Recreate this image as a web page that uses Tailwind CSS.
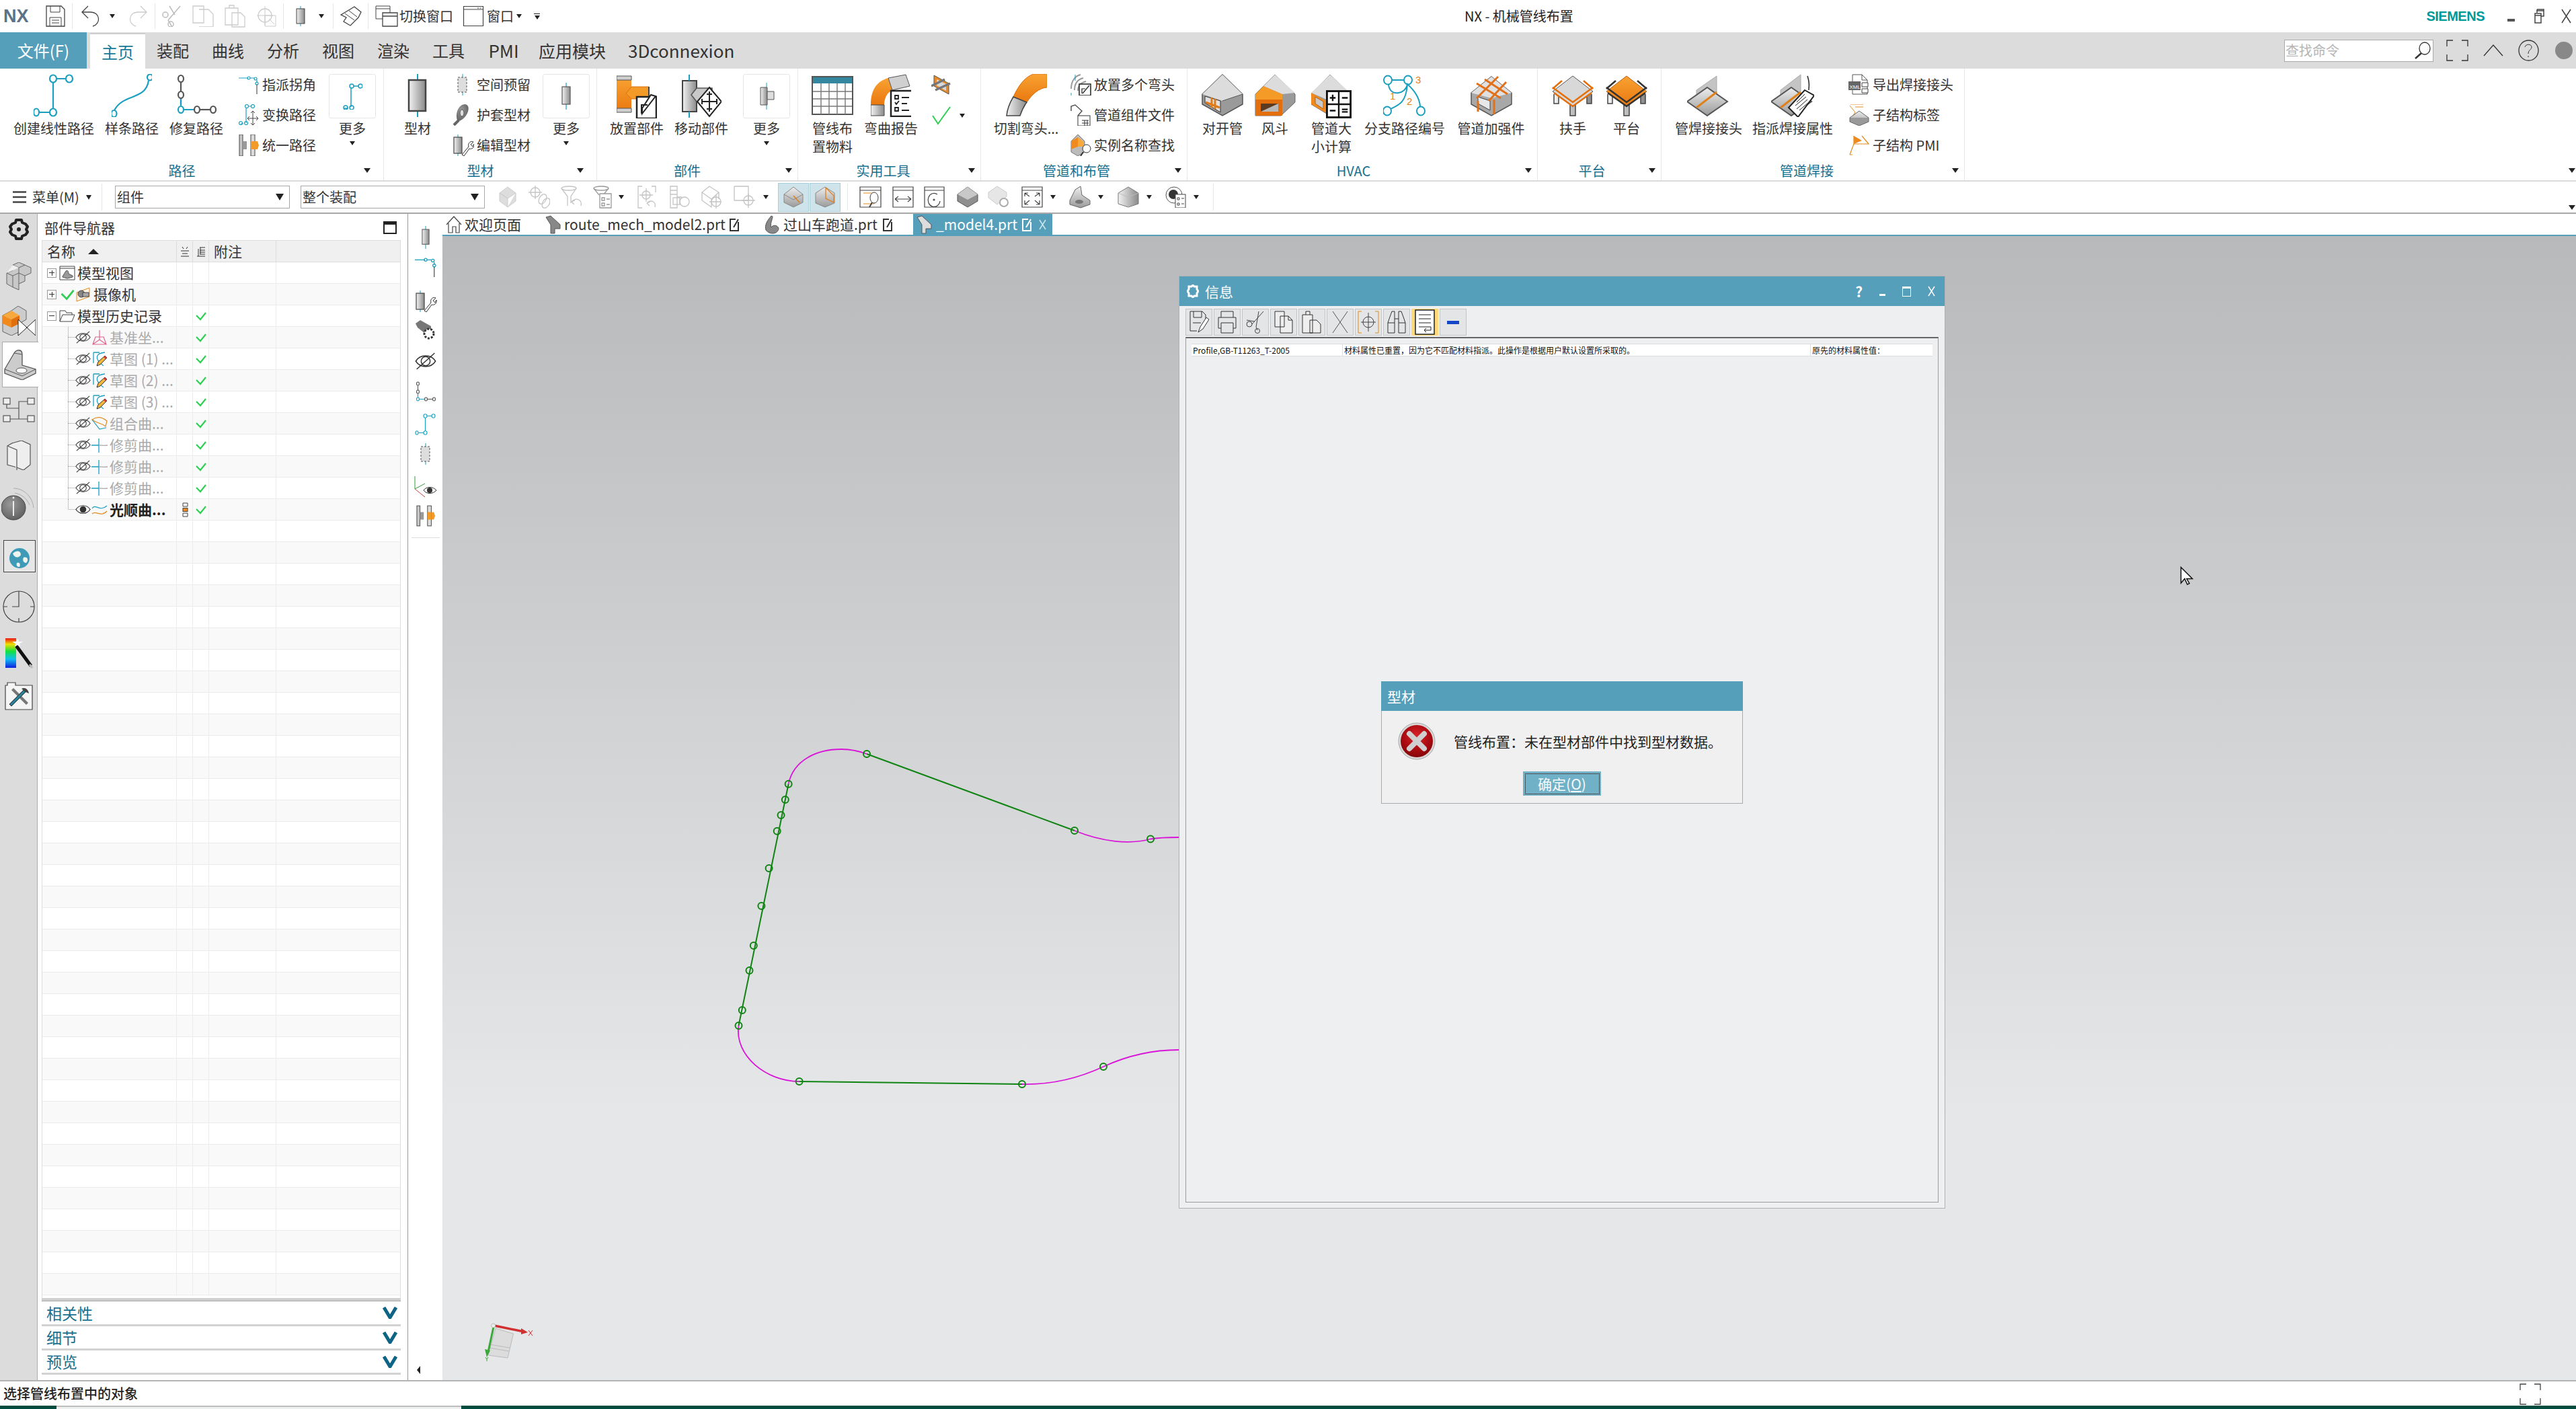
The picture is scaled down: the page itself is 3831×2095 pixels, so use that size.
<!DOCTYPE html>
<html lang="zh-CN">
<head>
<meta charset="UTF-8">
<title>NX - 机械管线布置</title>
<script src="https://cdn.jsdelivr.net/npm/@tailwindcss/browser@4"></script>
</head>
<body class="w-[3831px] h-[2095px] overflow-hidden bg-white text-[20px] text-[#333] font-['Noto_Sans_CJK_SC','Noto_Sans',sans-serif]">

<!-- shared gradients and icons -->
<svg class="absolute w-0 h-0">
  <defs>
    <linearGradient id="gv"><stop offset="0" stop-color="#f2f2f2"/><stop offset="1" stop-color="#8a8a8a"/></linearGradient>
    <linearGradient id="gd" x1="0" y1="0" x2="0" y2="1"><stop offset="0" stop-color="#eeeeee"/><stop offset="1" stop-color="#9a9a9a"/></linearGradient>
    <linearGradient id="go" x1="0" y1="0" x2="0" y2="1"><stop offset="0" stop-color="#f9a233"/><stop offset="1" stop-color="#e9780f"/></linearGradient>
    <radialGradient id="gr" cx=".5" cy=".35" r=".7"><stop offset="0" stop-color="#d8232a"/><stop offset=".6" stop-color="#a90b10"/><stop offset="1" stop-color="#7c0508"/></radialGradient>
    <radialGradient id="gg" cx=".4" cy=".35" r=".75"><stop offset="0" stop-color="#9a9a9a"/><stop offset="1" stop-color="#5a5a5a"/></radialGradient>
    <linearGradient id="grb" x1="0" y1="0" x2="0" y2="1"><stop offset="0" stop-color="#f01010"/><stop offset=".2" stop-color="#f0e000"/><stop offset=".45" stop-color="#10e040"/><stop offset=".7" stop-color="#10c0f0"/><stop offset="1" stop-color="#1020e0"/></linearGradient>

    <symbol id="i-linear" viewBox="0 0 60 64"><g fill="none" stroke="#1b9fc0" stroke-width="2.2"><path d="M34 7H48M29 12V52M9 57H24"/><ellipse cx="29" cy="7" rx="5" ry="5.5"/><ellipse cx="53" cy="7" rx="5" ry="5.5"/><ellipse cx="4" cy="57" rx="4" ry="5.5"/><ellipse cx="29" cy="57" rx="5" ry="5.5"/></g></symbol>
    <symbol id="i-spline" viewBox="0 0 60 64"><g fill="none" stroke="#1b9fc0" stroke-width="2.2"><path d="M55 10C50 40 18 28 4 54"/><ellipse cx="57" cy="5" rx="4" ry="4.5"/><ellipse cx="3.500" cy="59" rx="4" ry="5"/></g></symbol>
    <symbol id="i-repair" viewBox="0 0 60 64"><g fill="none" stroke-width="2.2"><path d="M7 13V26M7 37V47" stroke="#555"/><path d="M7 37V47M12 53H26" stroke="#1b9fc0"/><path d="M36 53H50" stroke="#555"/><ellipse cx="7" cy="7" rx="4" ry="5" stroke="#555"/><ellipse cx="7" cy="31" rx="4" ry="5" stroke="#555"/><ellipse cx="7" cy="53" rx="4" ry="5" stroke="#1b9fc0"/><ellipse cx="31" cy="53" rx="4" ry="5" stroke="#555"/><ellipse cx="55" cy="53" rx="4" ry="5" stroke="#555"/></g></symbol>
    <symbol id="i-more-route" viewBox="0 0 30 40"><g fill="none" stroke="#1b9fc0" stroke-width="1.500"><path d="M13 7V36M17 5H24M3 38H9"/><circle cx="14" cy="5" r="3"/><circle cx="27" cy="5" r="3"/><circle cx="5" cy="37" r="3"/><circle cx="14" cy="37" r="3"/></g></symbol>
    <symbol id="i-profile" viewBox="0 0 60 64"><path d="M30 0V64" stroke="#1b9fc0" stroke-width="2"/><rect x="17" y="9" width="25" height="46" fill="url(#gv)" stroke="#444" stroke-width="2.500"/></symbol>
    <symbol id="i-profile-s" viewBox="0 0 24 40"><path d="M12 0V40" stroke="#1b9fc0" stroke-width="1.200"/><rect x="6" y="6" width="12" height="26" fill="url(#gv)" stroke="#555" stroke-width="1.200"/></symbol>
    <symbol id="i-place" viewBox="0 0 60 64"><path d="M0 3H22V55H0Z" fill="url(#go)"/><path d="M22 18H48V36H22L14 28Z" fill="#f39a27" stroke="#d9700d"/><path d="M0 2H22V8H0ZM0 50H22V56H0Z" fill="#cfcfcf" stroke="#555"/><path d="M48 18V36" stroke="#444" stroke-width="2"/><rect x="30" y="33" width="29" height="32" fill="#fff" stroke="#222" stroke-width="2.500"/><path d="M37 58V45H46M38 58L58 32L51 30L38 50Z" fill="#fff" stroke="#222" stroke-width="2"/></symbol>
    <symbol id="i-move" viewBox="0 0 60 64"><path d="M2 9H23V55H2Z" fill="url(#gv)" stroke="#444" stroke-width="2"/><path d="M23 20H46V40H23L15 30Z" fill="#c8c8c8" stroke="#555" stroke-width="1.500"/><path d="M12 0V9M12 55V64" stroke="#1b9fc0" stroke-width="2"/><path d="M42 19L60 40L42 62L24 40Z" fill="#fff" stroke="#222" stroke-width="2"/><path d="M42 25V55M31 40H53M38 29H46M38 51H46M31 36V44M53 36V44" stroke="#222" stroke-width="2" fill="none"/></symbol>
    <symbol id="i-more-part" viewBox="0 0 30 40"><path d="M15 0V40" stroke="#1b9fc0" stroke-width="1"/><path d="M6 7H16V33H6Z" fill="url(#gv)" stroke="#555"/><path d="M16 13H26V25H16Z" fill="#ddd" stroke="#555"/></symbol>
    <symbol id="i-table" viewBox="0 0 62 60"><rect x="1" y="2" width="60" height="56" fill="#fff" stroke="#555" stroke-width="2"/><rect x="2" y="3" width="58" height="9" fill="#35869f"/><path d="M2 24H60M2 35H60M2 46H60M14 12V58M26 12V58M38 12V58M50 12V58" stroke="#777" stroke-width="1.400"/></symbol>
    <symbol id="i-bend" viewBox="0 0 60 64"><path d="M0 46C0 20 12 10 26 6L32 24C24 28 20 36 20 46Z" fill="url(#go)"/><path d="M0 46H20V62H0Z" fill="url(#gv)" stroke="#444"/><path d="M26 6L52 1L58 18L32 24Z" fill="#d0d0d0" stroke="#555"/><rect x="30" y="25" width="32" height="38" fill="#fff" stroke="#222" stroke-width="2.500"/><path d="M36 32h5v5h-5zM36 50h5v5h-5zM36 42l2 3 4-5M46 35h11M46 44h8M46 54h11" fill="none" stroke="#222" stroke-width="1.800"/></symbol>
    <symbol id="i-cut" viewBox="0 0 62 64"><path d="M42 0H62V20C50 21 40 30 32 42L12 34C20 16 30 4 42 0Z" fill="url(#go)" stroke="#d9700d"/><path d="M12 34L32 42C26 50 24 56 22 62H2C3 52 6 44 12 34Z" fill="url(#gv)" stroke="#444" stroke-width="1.500"/></symbol>
    <symbol id="i-split" viewBox="0 0 62 64"><path d="M31 1L61 30V45L31 62L1 45V30Z" fill="#9a9a9a" stroke="#555" stroke-width="1.500"/><path d="M31 1L61 30L31 40L1 30Z" fill="#dcdcdc"/><path d="M5 33L28 40V57L5 43Z" fill="#e0e0e0" stroke="#333"/><path d="M15 35V50M6 42L27 50M20 37V52" stroke="#e07a16" stroke-width="3"/><path d="M31 40L61 30" stroke="#555"/></symbol>
    <symbol id="i-hood" viewBox="0 0 62 64"><path d="M31 1L61 30V42L40 62H2V30Z" fill="#9a9a9a" stroke="#666" stroke-width="1"/><path d="M14 18L31 1L61 28L42 30Z" fill="#dcdcdc"/><path d="M2 38V30L14 18L42 30V38Z" fill="#f39a27"/><path d="M2 38H42V62H2Z" fill="#e36f0c"/><path d="M10 44H36V56H10Z" fill="#5a3a20"/><path d="M10 56L36 44V56Z" fill="#b8b8b8"/></symbol>
    <symbol id="i-size" viewBox="0 0 60 64"><path d="M28 1L58 30V45L28 62L0 45V30Z" fill="#9a9a9a" stroke="#666"/><path d="M28 1L58 28L28 40L0 28Z" fill="#dcdcdc"/><path d="M0 28L22 40V58L0 45Z" fill="#f08a1d"/><path d="M6 34L18 41V52L6 44Z" fill="#c8c8c8" stroke="#b85f10"/></symbol>
    <symbol id="i-calc" viewBox="0 0 40 44"><rect x="1.500" y="1.500" width="37" height="41" fill="#fff" stroke="#111" stroke-width="3"/><path d="M20 1V43M1 22H39M6 12H15M10.500 7V17M6 32H15M25 30H34M25 34H34M25 12H34" stroke="#111" stroke-width="2.500"/></symbol>
    <symbol id="i-branch" viewBox="0 0 64 64"><g fill="none" stroke="#1b9fc0" stroke-width="2"><path d="M13 9H31M8 16C10 35 34 30 36 15C46 24 54 36 55 48M11 52C24 46 34 42 36 16"/><ellipse cx="7" cy="9" rx="6" ry="6.500"/><ellipse cx="37" cy="9" rx="6" ry="6.500"/><ellipse cx="6" cy="55" rx="6" ry="6.500"/><ellipse cx="56" cy="55" rx="6" ry="6.500"/></g><text x="48" y="14" font-size="15" fill="#e9801a" font-family="Liberation Sans">3</text><text x="10" y="38" font-size="15" fill="#e9801a" font-family="Liberation Sans">1</text><text x="35" y="46" font-size="15" fill="#e9801a" font-family="Liberation Sans">2</text></symbol>
    <symbol id="i-stiff" viewBox="0 0 64 64"><path d="M32 4L62 28V45L32 62L2 45V28Z" fill="#a8a8a8" stroke="#555" stroke-width="1.500"/><path d="M32 4L62 28L32 36L2 28Z" fill="#e0e0e0"/><path d="M12 34L30 40V54L12 44Z" fill="#e8e8e8" stroke="#444"/><path d="M10 14L46 36M22 8L56 30M42 4L10 36M54 12L28 40M36 38V60M12 40V56" stroke="#e0701a" stroke-width="3" fill="none"/></symbol>
    <symbol id="i-rail" viewBox="0 0 64 64"><path d="M4 30V44h7V30M53 30V44h7V30M28 40V62h8V40" fill="url(#gv)" stroke="#444" stroke-width="1.500"/><path d="M32 3L62 26L32 48L2 26Z" fill="#d8d8d8" stroke="#555"/><path d="M2 20L32 42L62 20M4 28L32 48L60 28" fill="none" stroke="#e36f0c" stroke-width="2.500"/><path d="M16 10L2 22M48 10L62 22" stroke="#e36f0c" stroke-width="2.500"/></symbol>
    <symbol id="i-plat" viewBox="0 0 64 64"><path d="M4 30V44h7V30M53 30V44h7V30M28 40V62h8V40" fill="url(#gv)" stroke="#444" stroke-width="1.500"/><path d="M32 3L62 26L32 48L2 26Z" fill="url(#go)" stroke="#b85f10"/><path d="M2 20L32 42L62 20M4 28L32 48L60 28" fill="none" stroke="#333" stroke-width="2.500"/><path d="M16 10L2 22M48 10L62 22" stroke="#333" stroke-width="2.500"/></symbol>
    <symbol id="i-weld" viewBox="0 0 64 64"><path d="M14 24L44 3V40L14 50Z" fill="#c4c4c4" stroke="#aaa"/><path d="M30 20L60 41L30 62L0 41Z" fill="url(#gd)" stroke="#555" stroke-width="2"/><path d="M14 50L44 27" stroke="#e0801a" stroke-width="3"/></symbol>
    <symbol id="i-weldattr" viewBox="0 0 64 64"><path d="M14 24L44 1V40L14 50Z" fill="#c4c4c4" stroke="#aaa"/><path d="M30 20L60 41L30 62L0 41Z" fill="url(#gd)" stroke="#555" stroke-width="2"/><path d="M14 50L44 27" stroke="#e0801a" stroke-width="3"/><path d="M54 3C58 14 56 18 56 24" stroke="#222" fill="none" stroke-width="1.500"/><path d="M50 24L64 32L40 64L26 50Z" fill="#fff" stroke="#222" stroke-width="2"/><path d="M38 42L50 30M36 47L52 34M38 52L54 38M42 54L56 42" stroke="#222"/></symbol>

    <symbol id="s-corner" viewBox="0 0 30 30"><g fill="none" stroke="#1b9fc0" stroke-width="1.200"><path d="M0 5H14M17 5H23M27 8V12"/><circle cx="15" cy="5" r="2"/><circle cx="25" cy="6" r="2"/><circle cx="27" cy="13" r="2"/></g><path d="M27 15V29" stroke="#333"/></symbol>
    <symbol id="s-xform" viewBox="0 0 30 32"><g fill="none" stroke="#1b9fc0" stroke-width="1.200"><path d="M11 6V28M14 3H18M3 29H7"/><circle cx="12" cy="3" r="2.500"/><circle cx="21" cy="3" r="2.500"/><circle cx="3" cy="28" r="2.500"/><circle cx="11" cy="28" r="2.500"/></g><path d="M21 10V31M13 21H29M18 13L21 10L24 13M18 28L21 31L24 28M16 18L13 21L16 24M26 18L29 21L26 24" fill="none" stroke="#444"/></symbol>
    <symbol id="s-unify" viewBox="0 0 30 32"><rect x="1" y="0" width="5" height="32" fill="#c8c8c8" stroke="#444"/><rect x="18" y="0" width="6" height="32" fill="#ddd" stroke="#444"/><path d="M6 10H12V22H6Z" fill="#999"/><path d="M24 10H28L30 16L28 22H24Z" fill="#f39a27"/><path d="M18 10H24V22H18Z" fill="#f39a27"/></symbol>
    <symbol id="s-space" viewBox="0 0 30 32"><path d="M15 0V32" stroke="#1b9fc0"/><rect x="8" y="5" width="13" height="22" fill="#ddd" stroke="#555" stroke-dasharray="3 2"/></symbol>
    <symbol id="s-sleeve" viewBox="0 0 30 32"><path d="M8 26C2 14 10 0 18 0C28 0 24 18 12 24Z" fill="url(#gg)"/><ellipse cx="14" cy="13" rx="3" ry="5" fill="#ddd" stroke="#555"/><path d="M9 24L2 31" stroke="#666" stroke-width="4"/></symbol>
    <symbol id="s-edit" viewBox="0 0 32 32"><path d="M8 0V32" stroke="#1b9fc0"/><rect x="2" y="4" width="12" height="24" fill="url(#gv)" stroke="#444" stroke-width="1.200"/><path d="M14 30L24 18C22 12 28 9 31 11L27 15L30 18L32 14C33 20 28 22 25 21L17 32Z" fill="#fff" stroke="#333"/></symbol>
    <symbol id="s-u1" viewBox="0 0 30 32"><path d="M4 2L26 14V30L4 18Z" fill="#e88a2a" stroke="#555"/><path d="M8 8L22 15V25L8 17Z" fill="#d8d8d8"/><path d="M0 18L20 8M6 24L28 14" stroke="#777" stroke-width="3.500"/></symbol>
    <symbol id="s-multi" viewBox="0 0 32 32"><path d="M2 22C2 10 8 3 16 1M7 24C7 13 12 8 20 6M12 25C12 18 16 13 24 11" fill="none" stroke="#999" stroke-width="2"/><path d="M8 1V10M2 28V32" stroke="#1b9fc0"/><rect x="14" y="15" width="17" height="17" fill="#fff" stroke="#222" stroke-width="1.500"/><path d="M18 29V22H23M19 29L29 17" fill="none" stroke="#222" stroke-width="1.200"/></symbol>
    <symbol id="s-file" viewBox="0 0 32 32"><path d="M2 10V3L8 1L18 10L12 17" fill="none" stroke="#555" stroke-width="1.500"/><rect x="12" y="17" width="18" height="15" fill="#fff" stroke="#333"/><path d="M18 24H28M18 28H28M22 24V32M26 24V32" stroke="#333"/></symbol>
    <symbol id="s-find" viewBox="0 0 32 32"><path d="M2 10L12 0L22 10V26L12 32L2 26Z" fill="#bbb" stroke="#777"/><path d="M2 10L12 4L12 18L2 22Z" fill="#f08a1d"/><path d="M12 4L20 10V18H12Z" fill="#f7a93d"/><circle cx="25" cy="21" r="6" fill="#fff" stroke="#333"/><path d="M20 26L16 32" stroke="#333" stroke-width="2"/></symbol>
    <symbol id="s-xml" viewBox="0 0 32 32"><path d="M6 1H20L28 9V30H6Z" fill="#fff" stroke="#555"/><path d="M20 1V9H28" fill="none" stroke="#555"/><rect x="0" y="11" width="18" height="13" fill="#666"/><text x="1.500" y="21.500" font-size="8" fill="#fff" font-family="Liberation Sans">XML</text><path d="M20 13H29V19H20ZM20 22H29V28H20Z" fill="#fff" stroke="#444"/></symbol>
    <symbol id="s-sub" viewBox="0 0 32 32"><path d="M3 0H22M10 4H22M2 2L10 12L6 18" fill="none" stroke="#e08a1d"/><path d="M16 10L30 20L16 30L2 20Z" fill="url(#gd)" stroke="#666"/><path d="M2 20V26L16 32L30 26V20" fill="#999" stroke="#666"/></symbol>
    <symbol id="s-pmi" viewBox="0 0 32 32"><path d="M8 2V14L2 30" fill="none" stroke="#e08a1d" stroke-width="1.200"/><path d="M8 2L20 9L8 14Z" fill="#f08a1d"/><path d="M8 14L30 14L20 2M2 30H6" fill="none" stroke="#e08a1d" stroke-width="1.200"/></symbol>

    <symbol id="q-win" viewBox="0 0 32 32"><path d="M1.500 1.500H30.500V30.500H1.500ZM1.500 6H30.500" fill="#fff" stroke="#444" stroke-width="1.200"/><path d="M22 4H24M25.500 4H27.500" stroke="#444"/></symbol>
    <symbol id="eye-off" viewBox="0 0 24 24"><path d="M1 12C6 4 18 4 23 12C18 20 6 20 1 12Z" fill="none" stroke="#333" stroke-width="1.100"/><circle cx="12" cy="12" r="5" fill="none" stroke="#333" stroke-width="1.100"/><path d="M2 21L22 3" stroke="#333" stroke-width="1.100"/></symbol>
    <symbol id="eye-on" viewBox="0 0 24 24"><path d="M1 12C6 4 18 4 23 12C18 20 6 20 1 12Z" fill="none" stroke="#333" stroke-width="1.300"/><circle cx="12" cy="12" r="5" fill="#333"/></symbol>
    <symbol id="tick" viewBox="0 0 16 14"><path d="M1 6L7 12L15 2" fill="none" stroke="#2fcf55" stroke-width="2.200"/></symbol>
    <symbol id="t-sketch" viewBox="0 0 24 24"><path d="M3 2V18M3 2H12M20 2C8 3 2 10 18 22" fill="none" stroke="#1b9fc0" stroke-width="1.300"/><path d="M8 22L10 16L20 7L23 10L13 20Z" fill="#f3b83a" stroke="#333"/><path d="M20 7L23 10L21 12L18 9Z" fill="#d83a3a"/></symbol>
    <symbol id="t-trim" viewBox="0 0 24 24"><path d="M0 12H11M11 2V23" fill="none" stroke="#1b9fc0" stroke-width="1.300"/><path d="M11 12C15 12 20 13 24 12" fill="none" stroke="#aaa" stroke-width="1.300"/></symbol>
  </defs>
</svg>

<div class="flex flex-col h-full">

  <!-- quick access / title -->
  <header class="relative flex items-center h-[48px] shrink-0 bg-white">
    <span class="ml-[5px] w-[50px] text-[27px] leading-none font-bold text-[#5d7286] font-['Liberation_Sans',sans-serif]">NX</span>
    <svg class="ml-[12px] w-[30px] h-[32px]" viewBox="0 0 30 32"><path d="M2 1H24L29 6V31H2Z" fill="#fff" stroke="#444" stroke-width="1.300"/><path d="M8 1V10H22V1M7 18H24V31M7 31V18M10 22H21M10 26H21" fill="none" stroke="#444"/></svg>
    <div class="ml-[10px] w-px h-[38px] bg-[#e6e6e6]"></div>
    <svg class="ml-[12px] w-[30px] h-[32px]" viewBox="0 0 30 32"><path d="M11 1L2 10L11 19M2 10H14C30 10 30 28 18 31" fill="none" stroke="#444" stroke-width="1.300"/></svg>
    <span class="ml-[13px] w-0 h-0 border-x-[4px] border-x-transparent border-t-[6px] border-t-[#222]"></span>
    <svg class="ml-[19px] w-[30px] h-[32px]" viewBox="0 0 30 32"><path d="M19 1L28 10L19 19M28 10H16C0 10 0 28 12 31" fill="none" stroke="#ccc" stroke-width="1.300"/></svg>
    <div class="ml-[10px] w-px h-[38px] bg-[#e6e6e6]"></div>
    <svg class="ml-[9px] w-[30px] h-[32px]" viewBox="0 0 30 32"><path d="M28 1L10 22M12 1L20 14M10 22L16 32" fill="none" stroke="#bbb" stroke-width="1.500"/><circle cx="6" cy="14" r="4" fill="none" stroke="#bbb" stroke-width="1.500"/><circle cx="14" cy="28" r="4" fill="none" stroke="#bbb" stroke-width="1.500"/></svg>
    <svg class="ml-[16px] w-[32px] h-[32px]" viewBox="0 0 32 32"><path d="M1 1H17V26H1ZM10 6H24L31 13V32H10" fill="#fff" stroke="#ccc" stroke-width="1.300"/></svg>
    <svg class="ml-[15px] w-[32px] h-[34px]" viewBox="0 0 32 34"><path d="M2 5H21V30H2ZM8 5V1H15V5M12 12H25L31 18V33H12Z" fill="#fff" stroke="#ccc" stroke-width="1.300"/></svg>
    <svg class="ml-[15px] w-[32px] h-[32px]" viewBox="0 0 32 32"><path d="M14 1V30M2 15H26" stroke="#ccc"/><circle cx="14" cy="15" r="10" fill="none" stroke="#ccc" stroke-width="1.300"/><path d="M14 15H30V31H14ZM20 20L28 28" fill="none" stroke="#ccc"/></svg>
    <div class="ml-[9px] w-px h-[38px] bg-[#e6e6e6]"></div>
    <svg class="ml-[18px] w-[14px] h-[30px]" viewBox="0 0 14 30"><path d="M7 0V30" stroke="#1b9fc0"/><rect x="1" y="4" width="12" height="22" fill="url(#gv)" stroke="#444"/></svg>
    <span class="ml-[20px] w-0 h-0 border-x-[4px] border-x-transparent border-t-[6px] border-t-[#222]"></span>
    <div class="ml-[13px] w-px h-[38px] bg-[#e6e6e6]"></div>
    <svg class="ml-[9px] w-[34px] h-[32px]" viewBox="0 0 34 32"><path d="M2 14L22 2L32 10L28 18L16 30L6 24L10 18Z" fill="#fff" stroke="#444" stroke-width="1.300"/><path d="M8 12L22 22M14 8L26 17" stroke="#444"/></svg>
    <div class="ml-[8px] w-px h-[38px] bg-[#e6e6e6]"></div>
    <svg class="ml-[10px] w-[36px] h-[32px]" viewBox="0 0 36 32"><path d="M1 1H22V20H1ZM1 5H22" fill="#fff" stroke="#444"/><path d="M11 11H33V31H11ZM11 16H33" fill="#fff" stroke="#444" stroke-width="1.300"/></svg>
    <span class="w-[80px] leading-none">切换窗口</span>
    <svg class="ml-[14px] w-[32px] h-[32px]"><use href="#q-win"/></svg>
    <span class="ml-[4px] w-[40px] leading-none">窗口</span>
    <span class="ml-[4px] w-0 h-0 border-x-[4px] border-x-transparent border-t-[6px] border-t-[#222]"></span>
    <span class="ml-[18px] flex flex-col items-center"><span class="w-[9px] h-[1px] bg-[#222] mb-[2px]"></span><span class="w-0 h-0 border-x-[4px] border-x-transparent border-t-[6px] border-t-[#222]"></span></span>

    <span class="absolute left-[2178px] top-[9px] text-[#222] leading-[30px]">NX - 机械管线布置</span>

    <span class="ml-auto mr-[34px] text-[20px] font-bold tracking-[-0.5px] text-[#009999] font-['Liberation_Sans',sans-serif]">SIEMENS</span>
    <span class="mt-[11px] w-[11px] h-[4px] bg-[#555]"></span>
    <svg class="ml-[29px] w-[15px] h-[22px]" viewBox="0 0 15 22"><path d="M4 1H14V11H10M4 1V6M4 3H14" fill="none" stroke="#444" stroke-width="1.500"/><rect x="1" y="7" width="9" height="14" fill="#fff" stroke="#444" stroke-width="1.500"/><path d="M1 10H10" stroke="#444" stroke-width="1.500"/></svg>
    <svg class="ml-[25px] mr-[7px] w-[15px] h-[22px]" viewBox="0 0 15 22"><path d="M1 1L14 21M14 1L1 21" stroke="#444" stroke-width="1.500"/></svg>
  </header>

  <!-- ribbon tabs -->
  <nav class="flex items-stretch h-[54px] shrink-0 bg-[#dcdcdc] text-[24px] leading-none text-[#333]">
    <div class="flex items-center justify-center w-[129px] bg-[#569fbb] text-white">文件(F)</div>
    <div class="ml-[5px] mt-px flex items-center justify-center w-[82px] bg-white border-t-2 border-[#cfcfcf] text-[#17799a]">主页</div>
    <div class="flex items-center justify-center w-[82px]">装配</div>
    <div class="flex items-center justify-center w-[82px]">曲线</div>
    <div class="flex items-center justify-center w-[82px]">分析</div>
    <div class="flex items-center justify-center w-[82px]">视图</div>
    <div class="flex items-center justify-center w-[82px]">渲染</div>
    <div class="flex items-center justify-center w-[82px]">工具</div>
    <div class="flex items-center justify-center w-[82px] text-[26px]">PMI</div>
    <div class="ml-[-5px] flex items-center justify-center w-[132px] text-[25px]">应用模块</div>
    <div class="ml-[17px] flex items-center text-[26px]">3Dconnexion</div>
    <div class="ml-auto flex items-center">
      <div class="flex items-center justify-between w-[222px] h-[33px] pl-px pr-[2px] bg-white border border-[#aaa] text-[20px] text-[#b5b5b5]">
        <span>查找命令</span>
        <svg class="w-[26px] h-[26px]" viewBox="0 0 26 26"><ellipse cx="16" cy="10" rx="8" ry="9" fill="#fff" stroke="#333" stroke-width="1.300"/><path d="M11 17L2 25" stroke="#333" stroke-width="2.500"/></svg>
      </div>
      <svg class="ml-[19px] w-[33px] h-[32px]" viewBox="0 0 33 32" fill="none" stroke="#333" stroke-width="1.300"><path d="M10 1H1V10M23 1H32V10M1 22V31H10M32 22V31H23"/></svg>
      <svg class="ml-[22px] w-[30px] h-[18px]" viewBox="0 0 30 18" fill="none" stroke="#333" stroke-width="1.300"><path d="M1 17L15 1L29 17"/></svg>
      <svg class="ml-[22px] w-[31px] h-[32px]" viewBox="0 0 31 32" fill="none" stroke="#333"><ellipse cx="15.500" cy="16" rx="14.500" ry="15" stroke-width="1.300"/><path d="M10 11C11 6 20 6 20 11C20 15 15 15 15 21M15 24V26"/></svg>
      <div class="ml-[24px] mr-[5px] w-[26px] h-[26px] rounded-full bg-[#888]"></div>
    </div>
  </nav>

  <!-- ribbon -->
  <section class="flex h-[168px] shrink-0 border-b-2 border-[#dadada] bg-white text-[20px] leading-[27px] text-[#333]">

    <div class="flex flex-col w-[571px] shrink-0 border-r border-[#e8e8e8]">
      <div class="flex h-[139px] pt-[8px]">
        <div class="w-[150px] pl-[10px] flex flex-col items-center"><svg class="w-[60px] h-[64px]"><use href="#i-linear"/></svg><span class="mt-[3px]">创建线性路径</span></div>
        <div class="w-[92px] flex flex-col items-center"><svg class="w-[60px] h-[64px]"><use href="#i-spline"/></svg><span class="mt-[3px]">样条路径</span></div>
        <div class="w-[100px] flex flex-col items-center"><svg class="w-[60px] h-[64px]"><use href="#i-repair"/></svg><span class="mt-[3px]">修复路径</span></div>
        <div class="w-[147px] pl-[13px] mt-[-7px] flex flex-col">
          <div class="flex items-center h-[45px] gap-[5px]"><svg class="w-[30px] h-[30px]"><use href="#s-corner"/></svg>指派拐角</div>
          <div class="flex items-center h-[45px] gap-[5px]"><svg class="w-[30px] h-[32px]"><use href="#s-xform"/></svg>变换路径</div>
          <div class="flex items-center h-[45px] gap-[5px]"><svg class="w-[30px] h-[32px]"><use href="#s-unify"/></svg>统一路径</div>
        </div>
        <div class="w-[70px] flex flex-col items-center">
          <div class="flex items-center justify-center w-[70px] h-[66px] border border-[#e6e6e6] rounded-[3px]"><svg class="w-[30px] h-[40px]"><use href="#i-more-route"/></svg></div>
          <span class="mt-[1px]">更多</span>
          <span class="mt-[6px] w-0 h-0 border-x-[4px] border-x-transparent border-t-[6px] border-t-[#222]"></span>
        </div>
      </div>
      <div class="flex items-center h-[29px]"><span class="flex-1 text-center text-[#17708f]">路径</span><span class="w-[29px]"><span class="block w-0 h-0 border-x-[5px] border-x-transparent border-t-[7px] border-t-[#222]"></span></span></div>
    </div>

    <div class="flex flex-col w-[317px] shrink-0 border-r border-[#e8e8e8]">
      <div class="flex h-[139px] pt-[8px]">
        <div class="w-[102px] pr-[2px] flex flex-col items-center"><svg class="w-[60px] h-[64px]"><use href="#i-profile"/></svg><span class="mt-[3px]">型材</span></div>
        <div class="w-[134px] mt-[-7px] flex flex-col">
          <div class="flex items-center h-[45px] gap-[6px]"><svg class="w-[30px] h-[32px]"><use href="#s-space"/></svg>空间预留</div>
          <div class="flex items-center h-[45px] gap-[6px]"><svg class="w-[30px] h-[32px]"><use href="#s-sleeve"/></svg>护套型材</div>
          <div class="flex items-center h-[45px] gap-[4px]"><svg class="w-[32px] h-[32px]"><use href="#s-edit"/></svg>编辑型材</div>
        </div>
        <div class="w-[70px] flex flex-col items-center">
          <div class="flex items-center justify-center w-[70px] h-[66px] border border-[#e6e6e6] rounded-[3px]"><svg class="w-[24px] h-[40px]"><use href="#i-profile-s"/></svg></div>
          <span class="mt-[1px]">更多</span>
          <span class="mt-[6px] w-0 h-0 border-x-[4px] border-x-transparent border-t-[6px] border-t-[#222]"></span>
        </div>
      </div>
      <div class="flex items-center h-[29px]"><span class="flex-1 text-center text-[#17708f]">型材</span><span class="w-[29px]"><span class="block w-0 h-0 border-x-[5px] border-x-transparent border-t-[7px] border-t-[#222]"></span></span></div>
    </div>

    <div class="flex flex-col w-[299px] shrink-0 border-r border-[#e8e8e8]">
      <div class="flex h-[139px] pt-[8px]">
        <div class="w-[104px] pl-[14px] flex flex-col items-center"><svg class="w-[60px] h-[66px]"><use href="#i-place"/></svg><span class="mt-[1px]">放置部件</span></div>
        <div class="w-[102px] flex flex-col items-center"><svg class="w-[60px] h-[66px]"><use href="#i-move"/></svg><span class="mt-[1px]">移动部件</span></div>
        <div class="ml-[11px] w-[70px] flex flex-col items-center">
          <div class="flex items-center justify-center w-[70px] h-[66px] border border-[#e6e6e6] rounded-[3px]"><svg class="w-[30px] h-[40px]"><use href="#i-more-part"/></svg></div>
          <span class="mt-[1px]">更多</span>
          <span class="mt-[6px] w-0 h-0 border-x-[4px] border-x-transparent border-t-[6px] border-t-[#222]"></span>
        </div>
      </div>
      <div class="flex items-center h-[29px]"><span class="flex-1 text-center text-[#17708f] pr-[12px]">部件</span><span class="w-[18px]"><span class="block w-0 h-0 border-x-[5px] border-x-transparent border-t-[7px] border-t-[#222]"></span></span></div>
    </div>

    <div class="flex flex-col w-[272px] shrink-0 border-r border-[#e8e8e8]">
      <div class="flex h-[139px] pt-[8px]">
        <div class="w-[92px] pl-[10px] flex flex-col items-center"><svg class="w-[62px] h-[60px] mt-[2px]"><use href="#i-table"/></svg><span class="mt-[5px] w-[62px] text-center">管线布置物料</span></div>
        <div class="w-[92px] flex flex-col items-center"><svg class="w-[60px] h-[64px]"><use href="#i-bend"/></svg><span class="mt-[3px]">弯曲报告</span></div>
        <div class="ml-[10px] pl-[4px] flex flex-col items-start">
          <svg class="w-[30px] h-[32px]"><use href="#s-u1"/></svg>
          <div class="mt-[16px] flex items-center gap-[12px]"><svg class="w-[30px] h-[28px]" viewBox="0 0 30 28"><path d="M2 14L10 26L28 1" fill="none" stroke="#2fcf55" stroke-width="2"/></svg><span class="w-0 h-0 border-x-[4px] border-x-transparent border-t-[6px] border-t-[#222]"></span></div>
        </div>
      </div>
      <div class="flex items-center h-[29px]"><span class="flex-1 text-center text-[#17708f]">实用工具</span><span class="w-[18px]"><span class="block w-0 h-0 border-x-[5px] border-x-transparent border-t-[7px] border-t-[#222]"></span></span></div>
    </div>

    <div class="flex flex-col w-[307px] shrink-0 border-r border-[#e8e8e8]">
      <div class="flex h-[139px] pt-[8px]">
        <div class="w-[130px] pl-[4px] flex flex-col items-center"><svg class="w-[62px] h-[64px]"><use href="#i-cut"/></svg><span class="mt-[3px]">切割弯头...</span></div>
        <div class="ml-[2px] mt-[-7px] flex flex-col">
          <div class="flex items-center h-[45px] gap-[4px]"><svg class="w-[32px] h-[32px]"><use href="#s-multi"/></svg>放置多个弯头</div>
          <div class="flex items-center h-[45px] gap-[4px]"><svg class="w-[32px] h-[32px]"><use href="#s-file"/></svg>管道组件文件</div>
          <div class="flex items-center h-[45px] gap-[4px]"><svg class="w-[32px] h-[32px]"><use href="#s-find"/></svg>实例名称查找</div>
        </div>
      </div>
      <div class="flex items-center h-[29px]"><span class="flex-1 text-center text-[#17708f] pr-[4px]">管道和布管</span><span class="w-[18px]"><span class="block w-0 h-0 border-x-[5px] border-x-transparent border-t-[7px] border-t-[#222]"></span></span></div>
    </div>

    <div class="flex flex-col w-[521px] shrink-0 border-r border-[#e8e8e8]">
      <div class="flex h-[139px] pt-[8px]">
        <div class="w-[92px] pl-[12px] flex flex-col items-center"><svg class="w-[62px] h-[64px]"><use href="#i-split"/></svg><span class="mt-[3px]">对开管</span></div>
        <div class="w-[76px] flex flex-col items-center"><svg class="w-[62px] h-[64px]"><use href="#i-hood"/></svg><span class="mt-[3px]">风斗</span></div>
        <div class="w-[92px] flex flex-col items-center">
          <span class="relative w-[60px] h-[64px]"><svg class="w-[60px] h-[64px]"><use href="#i-size"/></svg><svg class="absolute left-[22px] top-[24px] w-[38px] h-[42px]"><use href="#i-calc"/></svg></span>
          <span class="mt-[3px] w-[62px] text-center">管道大小计算</span>
        </div>
        <div class="w-[126px] flex flex-col items-center"><svg class="w-[64px] h-[64px]"><use href="#i-branch"/></svg><span class="mt-[3px] whitespace-nowrap">分支路径编号</span></div>
        <div class="w-[131px] flex flex-col items-center"><svg class="w-[64px] h-[64px]"><use href="#i-stiff"/></svg><span class="mt-[3px]">管道加强件</span></div>
      </div>
      <div class="flex items-center h-[29px]"><span class="flex-1 text-center text-[#17708f] pr-[8px]">HVAC</span><span class="w-[18px]"><span class="block w-0 h-0 border-x-[5px] border-x-transparent border-t-[7px] border-t-[#222]"></span></span></div>
    </div>

    <div class="flex flex-col w-[184px] shrink-0 border-r border-[#e8e8e8]">
      <div class="flex h-[139px] pt-[8px]">
        <div class="w-[92px] pl-[12px] flex flex-col items-center"><svg class="w-[64px] h-[64px]"><use href="#i-rail"/></svg><span class="mt-[3px]">扶手</span></div>
        <div class="w-[80px] flex flex-col items-center"><svg class="w-[64px] h-[64px]"><use href="#i-plat"/></svg><span class="mt-[3px]">平台</span></div>
      </div>
      <div class="flex items-center h-[29px]"><span class="flex-1 text-center text-[#17708f] pr-[4px]">平台</span><span class="w-[18px]"><span class="block w-0 h-0 border-x-[5px] border-x-transparent border-t-[7px] border-t-[#222]"></span></span></div>
    </div>

    <div class="relative flex flex-col w-[451px] shrink-0 border-r border-[#e8e8e8]">
      <div class="flex h-[139px] pt-[8px]">
        <div class="w-[130px] pl-[10px] flex flex-col items-center"><svg class="w-[64px] h-[64px]"><use href="#i-weld"/></svg><span class="mt-[3px]">管焊接接头</span></div>
        <div class="w-[130px] flex flex-col items-center"><svg class="w-[64px] h-[64px]"><use href="#i-weldattr"/></svg><span class="mt-[3px]">指派焊接属性</span></div>
        <div class="ml-[18px] mt-[-7px] flex flex-col">
          <div class="flex items-center h-[45px] gap-[4px]"><svg class="w-[32px] h-[32px]"><use href="#s-xml"/></svg>导出焊接接头</div>
          <div class="flex items-center h-[45px] gap-[4px]"><svg class="w-[32px] h-[32px]"><use href="#s-sub"/></svg>子结构标签</div>
          <div class="flex items-center h-[45px] gap-[4px]"><svg class="w-[32px] h-[32px]"><use href="#s-pmi"/></svg>子结构 PMI</div>
        </div>
      </div>
      <div class="flex items-center h-[29px]"><span class="flex-1 text-center text-[#17708f]">管道焊接</span><span class="w-[18px]"><span class="block w-0 h-0 border-x-[5px] border-x-transparent border-t-[7px] border-t-[#222]"></span></span></div>
    </div>

    <div class="flex-1 flex items-end justify-end pb-[11px] pr-[1px]"><span class="w-0 h-0 border-x-[5px] border-x-transparent border-t-[7px] border-t-[#222]"></span></div>
  </section>

  <!-- selection bar -->
  <section class="flex items-center h-[48px] shrink-0 border-b-2 border-[#a8a8a8] bg-white text-[20px] text-[#333]">
    <svg class="ml-[19px] w-[20px] h-[18px]" viewBox="0 0 20 18"><path d="M0 1.500H20M0 9H20M0 16.500H20" stroke="#444" stroke-width="2.500"/></svg>
    <span class="ml-[9px] w-[74px] leading-none">菜单(M)</span>
    <span class="ml-[6px] w-0 h-0 border-x-[4px] border-x-transparent border-t-[7px] border-t-[#222]"></span>
    <div class="ml-[15px] w-px h-[40px] bg-[#e6e6e6]"></div>
    <div class="ml-[19px] flex items-center justify-between w-[260px] h-[34px] pl-[2px] pr-[8px] border border-[#a8a8a8]">组件<span class="w-0 h-0 border-x-[6px] border-x-transparent border-t-[10px] border-t-[#222]"></span></div>
    <div class="ml-[16px] flex items-center justify-between w-[274px] h-[34px] pl-[2px] pr-[8px] border border-[#a8a8a8]">整个装配<span class="w-0 h-0 border-x-[6px] border-x-transparent border-t-[10px] border-t-[#222]"></span></div>
    <svg class="ml-[20px] w-[28px] h-[32px]" viewBox="0 0 28 32" fill="#ddd" stroke="#ccc"><path d="M14 1L26 10L14 18L2 10ZM2 10V22L14 31V18ZM26 10V22L14 31"/></svg>
    <svg class="ml-[17px] w-[32px] h-[34px]" viewBox="0 0 32 34" fill="none" stroke="#c4c4c4" stroke-width="1.300"><circle cx="10" cy="10" r="7"/><path d="M10 0V20M0 10H20"/><ellipse cx="21" cy="20" rx="5" ry="8" transform="rotate(30 21 20)"/><ellipse cx="26" cy="26" rx="5" ry="8" transform="rotate(30 26 26)"/></svg>
    <svg class="ml-[16px] w-[34px] h-[34px]" viewBox="0 0 34 34" fill="none" stroke="#c4c4c4" stroke-width="1.300"><ellipse cx="12" cy="4" rx="11" ry="3"/><path d="M1 4L10 16V30M23 4L15 16V26M16 24C24 16 32 22 30 30M16 24L21 22M16 24L20 28"/></svg>
    <svg class="ml-[14px] w-[30px] h-[34px]" viewBox="0 0 30 34" fill="none" stroke="#999" stroke-width="1.300"><ellipse cx="12" cy="4" rx="11" ry="3"/><path d="M1 4L9 14M23 4L15 14"/><path d="M10 12H27V33H10ZM13 18h4v4h-4zM13 26h4v4h-4zM20 20h5M20 28h5" fill="#fff"/></svg>
    <span class="ml-[8px] w-0 h-0 border-x-[4px] border-x-transparent border-t-[6px] border-t-[#222]"></span>
    <svg class="ml-[20px] w-[28px] h-[34px]" viewBox="0 0 28 34" fill="none" stroke="#c4c4c4" stroke-width="1.300"><path d="M7 1H1V33H7M21 1H27V10"/><circle cx="13" cy="14" r="6"/><path d="M13 4V24M3 14H23M14 26C20 20 28 24 26 32M14 26L19 24M14 26L18 30"/></svg>
    <svg class="ml-[20px] w-[30px] h-[34px]" viewBox="0 0 30 34" fill="none" stroke="#c4c4c4" stroke-width="1.300"><path d="M1 1H11V33H1ZM1 7H11M1 13H11M11 17H18"/><rect x="5" y="18" width="10" height="10"/><circle cx="22" cy="24" r="7"/></svg>
    <svg class="ml-[17px] w-[30px] h-[34px]" viewBox="0 0 30 34" fill="none" stroke="#c4c4c4" stroke-width="1.300"><path d="M1 10L12 1L26 10L15 20ZM1 10V22L15 32V20ZM26 10V20"/><circle cx="22" cy="24" r="7"/><path d="M22 14V34M12 24H30"/></svg>
    <svg class="ml-[18px] w-[32px] h-[34px]" viewBox="0 0 32 34" fill="none" stroke="#c4c4c4" stroke-width="1.300"><path d="M1 1H22V22M1 1V22H22"/><circle cx="22" cy="22" r="7"/><path d="M22 12V33M12 22H32"/></svg>
    <span class="ml-[12px] w-0 h-0 border-x-[4px] border-x-transparent border-t-[6px] border-t-[#222]"></span>
    <div class="ml-[14px] flex items-center justify-center w-[46px] h-[43px] bg-[#cfe4ea] border border-[#a9cdd9]">
      <svg class="w-[30px] h-[32px]" viewBox="0 0 30 32"><path d="M15 1L29 12V24L15 31L1 24V12Z" fill="url(#gd)" stroke="#888"/><path d="M1 12L15 20L29 12" fill="none" stroke="#888"/><path d="M15 14L24 24" stroke="#e0801a" stroke-width="1.500"/></svg>
    </div>
    <div class="ml-px flex items-center justify-center w-[46px] h-[43px] bg-[#cfe4ea] border border-[#a9cdd9]">
      <svg class="w-[30px] h-[32px]" viewBox="0 0 30 32"><path d="M15 1L29 10V25L15 31L1 25V10Z" fill="url(#gd)" stroke="#888"/><path d="M16 2L28 14V24M16 2V18L28 24" fill="none" stroke="#e0801a" stroke-width="1.300"/></svg>
    </div>
    <div class="ml-[10px] w-px h-[40px] bg-[#e6e6e6]"></div>
    <svg class="ml-[17px] w-[33px] h-[32px]" viewBox="0 0 33 32" fill="none"><path d="M1 1H32V31H1ZM1 6H32" stroke="#444" stroke-width="1.200"/><path d="M6 10H22V26H6" stroke="#e08a1d"/><ellipse cx="22" cy="17" rx="6" ry="8" fill="#fff" stroke="#444"/><path d="M19 24L15 31" stroke="#444" stroke-width="2"/></svg>
    <svg class="ml-[16px] w-[32px] h-[32px]" viewBox="0 0 32 32" fill="none" stroke="#444" stroke-width="1.200"><path d="M1 1H31V31H1ZM1 6H31M4 19H28M4 19L9 15M4 19L9 23M28 19L23 15M28 19L23 23"/></svg>
    <svg class="ml-[15px] w-[31px] h-[32px]" viewBox="0 0 31 32" fill="none" stroke="#444" stroke-width="1.200"><path d="M1 1H30V31H1ZM1 6H30M20 12A9 10 0 1 0 24 22"/><circle cx="15" cy="20" r="1"/></svg>
    <svg class="ml-[18px] w-[32px] h-[32px]" viewBox="0 0 32 32"><path d="M16 1L31 12V22L16 31L1 22V12Z" fill="#8f8f8f" stroke="#555"/><path d="M16 1L31 12L16 20L1 12Z" fill="#c8c8c8"/></svg>
    <svg class="ml-[14px] w-[33px] h-[34px]" viewBox="0 0 33 34"><path d="M14 1L28 10V16L14 28L1 18V10Z" fill="#e6e6e6" stroke="#ccc"/><circle cx="24" cy="25" r="6" fill="#fff" stroke="#aaa" stroke-width="2"/></svg>
    <svg class="ml-[17px] w-[32px] h-[32px]" viewBox="0 0 32 32" fill="none" stroke="#444" stroke-width="1.200"><path d="M1 1H31V31H1ZM1 6H31M5 10L12 15M5 10V15M5 10H10M27 10L20 15M27 10V15M27 10H22M5 27L12 21M5 27V21M5 27H10M27 27L20 21M27 27V21M27 27H22"/></svg>
    <span class="ml-[11px] w-0 h-0 border-x-[4px] border-x-transparent border-t-[6px] border-t-[#222]"></span>
    <svg class="ml-[19px] w-[34px] h-[34px]" viewBox="0 0 34 34"><path d="M2 22L10 6L18 1L20 14L32 22V28L18 33L2 28Z" fill="url(#gd)" stroke="#666"/><ellipse cx="16" cy="24" rx="6" ry="3" fill="#777"/></svg>
    <span class="ml-[10px] w-0 h-0 border-x-[4px] border-x-transparent border-t-[6px] border-t-[#222]"></span>
    <svg class="ml-[21px] w-[32px] h-[32px]" viewBox="0 0 32 32"><path d="M16 1L31 10V26L16 31L1 26V10Z" fill="url(#gv)" stroke="#777"/><path d="M1 10L16 16L31 10M16 16V31" stroke="#bbb" fill="none"/></svg>
    <span class="ml-[11px] w-0 h-0 border-x-[4px] border-x-transparent border-t-[6px] border-t-[#222]"></span>
    <svg class="ml-[19px] w-[32px] h-[32px]" viewBox="0 0 32 32"><circle cx="14" cy="13" r="12" fill="#fff" stroke="#555"/><circle cx="13" cy="12" r="7" fill="#333"/><rect x="16" y="12" width="15" height="20" fill="#fff" stroke="#444"/><path d="M19 17h3v3h-3zM19 25h3v3h-3zM25 18h4M25 26h4" stroke="#444" fill="none"/></svg>
    <span class="ml-[11px] w-0 h-0 border-x-[4px] border-x-transparent border-t-[6px] border-t-[#222]"></span>
    <div class="ml-[21px] w-px h-[40px] bg-[#e6e6e6]"></div>
    <div class="flex-1 self-end flex justify-end pb-[4px] pr-px"><span class="w-0 h-0 border-x-[5px] border-x-transparent border-t-[7px] border-t-[#222]"></span></div>
  </section>

  <!-- main area -->
  <main class="flex flex-1 min-h-0">

    <!-- resource bar -->
    <aside class="relative flex flex-col items-center w-[56px] shrink-0 bg-[#dcdcdc] border-r border-[#aaa]">
      <svg class="mt-[7px] w-[30px] h-[32px]" viewBox="0 0 30 32"><path d="M15 2L19 2L20 6L25 8L28 12L26 16L28 20L25 24L20 26L19 30H11L10 26L5 24L2 20L4 16L2 12L5 8L10 6L11 2Z" fill="none" stroke="#222" stroke-width="4" stroke-linejoin="round"/><circle cx="15" cy="16" r="3" fill="#222"/></svg>
      <svg class="mt-[33px] w-[38px] h-[42px]" viewBox="0 0 38 42"><path d="M10 4L19 0L28 4L37 8V16L28 20V28L19 32V41L10 37L1 32V16L10 12Z" fill="#c8c8c8" stroke="#666"/><path d="M1 16L10 20L19 16L28 20M10 20V37M19 16V32M10 4L19 8L28 4M19 8V16" fill="none" stroke="#666"/><path d="M10 4L19 8L10 12L1 16Z" fill="#f0f0f0"/></svg>
      <div class="relative mt-[23px] w-[50px] h-[44px]">
        <svg class="w-[50px] h-[44px]" viewBox="0 0 50 44"><path d="M1 14L14 7L24 0L36 7V20L26 26V38L14 44L1 38Z" fill="#ccc" stroke="#666"/><path d="M1 14L14 7L26 14L14 20Z" fill="#f7a93d"/><path d="M1 14L14 20V32L1 26Z" fill="#f08a1d"/><path d="M14 20L26 14V26L14 32Z" fill="#e36f0c"/><path d="M24 20L50 44V20L24 44Z" fill="#fff" stroke="#222"/></svg>
      </div>
      <div class="relative mt-[9px] ml-[3px] flex items-center justify-center w-[54px] h-[68px] bg-white border-y border-l border-[#aaa] mr-[-1px]">
        <svg class="w-[50px] h-[46px]" viewBox="0 0 50 46"><path d="M2 30L16 6C20 0 28 0 28 8V24L48 30V36L28 46L2 36Z" fill="#ccc" stroke="#555" stroke-width="1.300"/><path d="M16 6L28 8M2 30L28 40L48 30" fill="none" stroke="#555"/><ellipse cx="27" cy="32" rx="8" ry="4" fill="#fff" stroke="#555"/></svg>
      </div>
      <svg class="mt-[15px] w-[48px] h-[38px]" viewBox="0 0 48 38" fill="none" stroke="#555" stroke-width="1.200"><rect x="1" y="1" width="10" height="9" fill="#eee"/><rect x="37" y="1" width="10" height="9" fill="#eee"/><rect x="1" y="27" width="10" height="9" fill="#eee"/><rect x="37" y="27" width="10" height="9" fill="#eee"/><path d="M6 10V16H24V32M24 16V6H37M11 32H37"/></svg>
      <svg class="mt-[26px] w-[36px] h-[44px]" viewBox="0 0 36 44" fill="#eee" stroke="#555" stroke-width="1.200"><path d="M1 8L8 4L25 10V44L15 40L1 36Z"/><path d="M1 8L15 14V44M8 4L22 0L35 6V36L25 44"/></svg>
      <div class="mt-[26px] relative w-[52px] h-[50px]">
        <svg class="w-[52px] h-[50px]" viewBox="0 0 52 50"><path d="M18 1C32 1 46 12 48 30M20 8C30 10 38 16 42 26" fill="none" stroke="#aaa"/><circle cx="18" cy="30" r="18" fill="url(#gg)" stroke="#444"/><path d="M18 20V42" stroke="#eee" stroke-width="2"/><circle cx="18" cy="15" r="1.500" fill="#eee"/></svg>
      </div>
      <div class="mt-[28px] flex items-center justify-center w-[48px] h-[48px] border border-[#444] bg-[#e6e6e6] ml-[2px]">
        <svg class="w-[32px] h-[34px] mt-[6px]" viewBox="0 0 32 34"><circle cx="16" cy="17" r="15" fill="#3f9ab8"/><path d="M6 10C12 4 18 6 18 12C14 18 8 16 6 10ZM22 16C28 14 30 20 26 24C22 24 20 20 22 16ZM12 24C16 22 18 26 16 30C12 30 11 27 12 24Z" fill="#f0f4ee"/></svg>
      </div>
      <svg class="mt-[27px] w-[48px] h-[48px]" viewBox="0 0 48 48" fill="none" stroke="#444" stroke-width="1.200"><ellipse cx="24" cy="24" rx="23" ry="23"/><path d="M24 1V24H14M24 1V7M24 41V47M1 24H7M41 24H47"/></svg>
      <div class="relative mt-[22px] w-[44px] h-[46px]">
        <svg class="w-[44px] h-[46px]" viewBox="0 0 44 46"><rect x="2" y="1" width="16" height="44" fill="url(#grb)"/><path d="M18 12L40 42" stroke="#111" stroke-width="5"/><path d="M18 6L21 2L22 6L28 6L23 9L24 14L20 11L16 14L17 9L12 6Z" fill="#fff"/><path d="M38 40L42 45" stroke="#bbb" stroke-width="3"/></svg>
      </div>
      <svg class="mt-[20px] w-[42px] h-[42px]" viewBox="0 0 42 42"><path d="M1 5H4V1H16V5H41V41H1Z" fill="#f5f5f5" stroke="#444" stroke-width="1.200"/><path d="M10 12L32 34L35 31L13 9Z" fill="#777"/><path d="M7 33L28 12L31 15L10 36Z" fill="#2a7f96" stroke="#333"/><path d="M25 10C30 7 35 11 36 17L31 15Z" fill="#444"/></svg>
    </aside>

    <!-- part navigator -->
    <aside class="flex flex-col w-[551px] shrink-0 border-r border-[#999] bg-white">
      <div class="flex items-center justify-between h-[39px] pl-[10px] pr-[16px] pt-[2px] leading-none text-[21px] text-[#333]">
        <span>部件导航器</span>
        <span class="block w-[20px] h-[19px] border-2 border-[#222] border-t-[5px]"></span>
      </div>
      <div class="mx-[6px] w-[534px] flex-1 min-h-0 flex flex-col border-x border-t border-[#ddd]">
        <div class="flex h-[32px] shrink-0 bg-[#f0f0f0] border-b border-[#ddd] text-[21px] leading-none text-[#333]">
          <div class="flex items-center w-[200px] pl-[7px] border-r border-[#ddd]">名称<span class="ml-[19px] w-0 h-0 border-x-[8px] border-x-transparent border-b-[8px] border-b-[#222]"></span></div>
          <div class="flex items-center justify-center w-[24px] border-r border-[#ddd] text-[12px] leading-none"><svg class="w-[12px] h-[16px]" viewBox="0 0 12 16" fill="none" stroke="#333"><path d="M2 1L4 4M10 1L8 4M0 7H12M2 11H10M0 15H12"/></svg></div>
          <div class="flex items-center justify-center w-[24px] border-r border-[#ddd]"><svg class="w-[12px] h-[16px]" viewBox="0 0 12 16" fill="none" stroke="#333"><path d="M2 4V15M4 2H12M4 6H12M4 9H12M4 12H12M0 15H12M5 2V12"/></svg></div>
          <div class="flex items-center w-[100px] pl-[7px] border-r border-[#ddd]">附注</div>
          <div class="flex-1"></div>
        </div>
        <div id="rows" class="flex-1 min-h-0 overflow-hidden text-[21px]"></div>
      </div>
      <div class="mx-[6px] w-[534px] h-[5px] shrink-0 bg-[#cfcfcf] border-b border-[#aaa]"></div>
      <div class="mx-[6px] w-[534px] shrink-0 text-[#17708f] text-[23px]">
        <div class="flex items-center justify-between h-[37px] border-b-[3px] border-[#d2d2d2] pl-[7px] pr-[5px]">相关性<svg class="w-[22px] h-[18px]" viewBox="0 0 22 18"><path d="M2 1L11 16L20 1" fill="none" stroke="#0d6484" stroke-width="5"/></svg></div>
        <div class="flex items-center justify-between h-[36px] border-b-[3px] border-[#d2d2d2] pl-[7px] pr-[5px]">细节<svg class="w-[22px] h-[18px]" viewBox="0 0 22 18"><path d="M2 1L11 16L20 1" fill="none" stroke="#0d6484" stroke-width="5"/></svg></div>
        <div class="flex items-center justify-between h-[36px] border-b-[3px] border-[#d2d2d2] pl-[7px] pr-[5px]">预览<svg class="w-[22px] h-[18px]" viewBox="0 0 22 18"><path d="M2 1L11 16L20 1" fill="none" stroke="#0d6484" stroke-width="5"/></svg></div>
      </div>
      <div class="h-[8px] shrink-0"></div>
    </aside>

    <!-- assembly tools strip -->
    <aside class="relative flex flex-col items-center w-[51px] shrink-0 bg-white">
      <svg class="mt-[18px] w-[24px] h-[34px]" viewBox="0 0 24 40"><use href="#i-profile-s"/></svg>
      <svg class="mt-[11px] w-[32px] h-[32px]"><use href="#s-corner"/></svg>
      <svg class="mt-[19px] w-[34px] h-[32px]"><use href="#s-edit"/></svg>
      <svg class="mt-[11px] w-[32px] h-[32px]" viewBox="0 0 32 32"><path d="M1 6L8 1L24 10V20L14 20L4 12Z" fill="#777"/><circle cx="21" cy="21" r="7" fill="#fff" stroke="#333" stroke-width="3" stroke-dasharray="3 2"/></svg>
      <svg class="mt-[14px] w-[32px] h-[32px]"><use href="#eye-off"/></svg>
      <svg class="mt-[14px] w-[32px] h-[32px]"><use href="#i-repair"/></svg>
      <svg class="mt-[16px] w-[32px] h-[32px]"><use href="#i-linear"/></svg>
      <svg class="mt-[12px] w-[30px] h-[32px]"><use href="#s-space"/></svg>
      <svg class="mt-[16px] w-[34px] h-[32px]" viewBox="0 0 34 32"><path d="M1 1V20" stroke="#2fa02f"/><path d="M1 20L16 12" stroke="#2fa02f"/><path d="M1 20L16 32" stroke="#d83a3a"/><path d="M14 22C18 16 28 16 33 22C28 28 18 28 14 22Z" fill="#fff" stroke="#333"/><circle cx="23" cy="22" r="4" fill="#333"/></svg>
      <svg class="mt-[12px] w-[28px] h-[32px]"><use href="#s-unify"/></svg>
      <div class="mt-[16px] w-[42px] h-px bg-[#ddd]"></div>
      <span class="absolute left-[13px] bottom-[9px] w-0 h-0 border-y-[6px] border-y-transparent border-r-[5px] border-r-[#222]"></span>
    </aside>

    <!-- graphics window -->
    <div class="flex flex-col flex-1 min-w-0">
      <div class="flex items-stretch h-[33px] shrink-0 border-b-2 border-[#569fbb] bg-white text-[21px] leading-none text-[#333]">
        <svg class="ml-[5px] self-center w-[24px] h-[26px]" viewBox="0 0 24 26" fill="none" stroke="#444" stroke-width="1.200"><path d="M1 13L12 1L23 13M4 11V25H10V16H15V25H20V11"/></svg>
        <span class="ml-[4px] w-[84px] self-center whitespace-nowrap">欢迎页面</span>
        <svg class="ml-[36px] self-center w-[24px] h-[28px]" viewBox="0 0 24 28"><path d="M1 3L8 1L22 14V20L14 20V27H8V14Z" fill="#888" stroke="#555"/></svg>
        <span class="ml-[4px] w-[238px] self-center whitespace-nowrap">route_mech_model2.prt</span>
        <svg class="ml-[8px] self-center w-[14px] h-[20px]" viewBox="0 0 14 20" fill="none" stroke="#333" stroke-width="2"><path d="M9 2H1V19H13V6M6 14L13 2"/></svg>
        <svg class="ml-[38px] self-center w-[22px] h-[28px]" viewBox="0 0 22 28"><path d="M10 1C4 8 0 14 2 22C8 30 20 28 21 20C20 14 12 14 10 18C8 12 12 6 12 2Z" fill="#888" stroke="#555"/></svg>
        <span class="ml-[6px] w-[138px] self-center whitespace-nowrap">过山车跑道.prt</span>
        <svg class="ml-[10px] self-center w-[14px] h-[20px]" viewBox="0 0 14 20" fill="none" stroke="#333" stroke-width="2"><path d="M9 2H1V19H13V6M6 14L13 2"/></svg>
        <div class="ml-[31px] flex items-center w-[207px] bg-[#569fbb] text-white">
          <svg class="ml-[5px] w-[24px] h-[28px]" viewBox="0 0 24 28"><path d="M1 3L8 1L22 14V20L14 20V27H8V14Z" fill="#ddd" stroke="#555"/></svg>
          <span class="ml-[5px] w-[118px] whitespace-nowrap">_model4.prt</span>
          <svg class="ml-[10px] w-[14px] h-[20px]" viewBox="0 0 14 20" fill="none" stroke="#fff" stroke-width="2"><path d="M9 2H1V19H13V6M6 14L13 2"/></svg>
          <svg class="ml-[11px] w-[11px] h-[16px]" viewBox="0 0 11 16" fill="none" stroke="#cfe4ea" stroke-width="1.500"><path d="M1 1L10 15M10 1L1 15"/></svg>
        </div>
      </div>

      <div class="relative flex-1 min-h-0 overflow-hidden bg-[linear-gradient(180deg,#b8b9ba_0%,#e6e7e8_77%)]">
        <!-- routed path, page coordinates -->
        <svg class="absolute inset-0 w-full h-full" viewBox="658 351 3173 1701" fill="none">
          <g stroke="#d914d9" stroke-width="1.800">
            <path d="M1172.600 1165.700C1180 1130 1215 1114 1251 1114C1265 1114 1278 1117 1289 1121"/>
            <path d="M1598 1235C1640 1252 1680 1256 1711 1247.500C1725 1245 1740 1245 1753 1245"/>
            <path d="M1098.500 1525C1092 1570 1140 1608 1188.600 1608"/>
            <path d="M1520 1612C1560 1613 1600 1605 1641 1586C1680 1568 1720 1561 1753 1561"/>
          </g>
          <g stroke="#0f8412" stroke-width="2">
            <path d="M1289 1121L1598 1235M1172.600 1165.700L1098.500 1525M1188.600 1608L1520 1612"/>
            <circle cx="1289" cy="1121" r="5"/><circle cx="1598" cy="1235" r="5"/><circle cx="1711" cy="1247.500" r="5"/>
            <circle cx="1172.600" cy="1165.700" r="5"/><circle cx="1167.800" cy="1189" r="5"/><circle cx="1161.500" cy="1212" r="5"/><circle cx="1155.700" cy="1235.700" r="5"/>
            <circle cx="1143.600" cy="1291" r="5"/><circle cx="1132.400" cy="1347" r="5"/><circle cx="1120.800" cy="1406" r="5"/><circle cx="1114.500" cy="1443" r="5"/>
            <circle cx="1103.800" cy="1502" r="5"/><circle cx="1098.500" cy="1525" r="5"/><circle cx="1188.600" cy="1608" r="5"/><circle cx="1520" cy="1612" r="5"/><circle cx="1641" cy="1586" r="5"/>
          </g>
          <!-- triad -->
          <path d="M737 1975L763.500 1983L755 2019L726 2015Z" fill="#dcdcdc" stroke="#bbb"/>
          <path d="M728 1999L758 2004M727 2004L757 2009" stroke="#bbb"/>
          <path d="M735 1971L779 1980" stroke="#d03030" stroke-width="3.500"/>
          <path d="M775 1975L785 1981L775 1984Z" fill="#d03030"/>
          <path d="M734 1973L726 2010" stroke="#3aa83a" stroke-width="3"/>
          <path d="M721 2006L729 2008L724 2018Z" fill="#3aa83a"/>
          <circle cx="733.600" cy="1971" r="3" fill="#eee" stroke="#bbb"/>
          <path d="M786 1978L792 1986M792 1978L786 1986" stroke="#d03030"/>
          <path d="M722 2018L724 2021L726 2018M724 2021V2024" stroke="#3aa83a"/>
          <!-- cursor -->
          <path d="M3243.500 843.500V867L3249 860.500L3253 869L3256 867.500L3252 860.500H3260.500Z" fill="#fff" stroke="#111" stroke-width="1.500"/>
        </svg>

        <!-- information window -->
        <section class="absolute left-[1095px] top-[59px] w-[1140px] h-[1387px] flex flex-col bg-[#eeeff0] border border-[#aeb0b2]">
          <div class="flex items-center justify-between h-[44px] shrink-0 bg-[#569fbb] text-white text-[21px] leading-none">
            <div class="flex items-center pl-[11px]">
              <svg class="w-[18px] h-[20px]" viewBox="0 0 18 20"><path d="M9 1L11 3L15 3L15 7L17 10L15 13L15 17L11 17L9 19L7 17L3 17L3 13L1 10L3 7L3 3L7 3Z" fill="none" stroke="#fff" stroke-width="3"/></svg>
              <span class="ml-[9px]">信息</span>
            </div>
            <div class="flex items-center pr-[14px] gap-[25px]">
              <span class="font-bold">?</span>
              <span class="mt-[11px] w-[9px] h-[3px] bg-white"></span>
              <span class="w-[13px] h-[15px] border border-white border-t-[3px]"></span>
              <svg class="w-[11px] h-[16px]" viewBox="0 0 11 16"><path d="M1 1L10 15M10 1L1 15" stroke="#fff" stroke-width="1.500"/></svg>
            </div>
          </div>
          <div class="flex items-center gap-[2px] h-[46px] shrink-0 pl-[9px] pt-[2px]">
            <button class="flex items-center justify-center w-[40px] h-[40px] bg-[#e4e5e6] border border-[#c4c4c4]"><svg class="w-[30px] h-[34px]" viewBox="0 0 30 34"><path d="M2 1H20L25 6V14M2 1V30H12M7 1V10H19V1M6 18H18" fill="none" stroke="#333"/><path d="M14 32L17 24L26 10L30 13L21 27Z" fill="#fff" stroke="#333"/></svg></button>
            <button class="flex items-center justify-center w-[40px] h-[40px] bg-[#e4e5e6] border border-[#c4c4c4]"><svg class="w-[30px] h-[34px]" viewBox="0 0 30 34" fill="none" stroke="#333"><path d="M6 10V1H24V10M2 10H28V26H24M2 10V26H6M6 18H24V33H6Z"/></svg></button>
            <button class="flex items-center justify-center w-[40px] h-[40px] bg-[#e4e5e6] border border-[#c4c4c4]"><svg class="w-[30px] h-[34px]" viewBox="0 0 30 34" fill="none" stroke="#444"><path d="M27 1L10 20M20 1L16 24L18 29"/><circle cx="6" cy="20" r="4"/><circle cx="18" cy="30" r="3.500"/><path d="M2 14L14 16"/></svg></button>
            <button class="flex items-center justify-center w-[40px] h-[40px] bg-[#e4e5e6] border border-[#c4c4c4]"><svg class="w-[30px] h-[34px]" viewBox="0 0 30 34" fill="none" stroke="#333"><path d="M2 1H16V24H2ZM10 8H22L28 14V33H10Z" fill="#eee"/><path d="M22 8V14H28"/></svg></button>
            <button class="flex items-center justify-center w-[40px] h-[40px] bg-[#e4e5e6] border border-[#c4c4c4]"><svg class="w-[30px] h-[34px]" viewBox="0 0 30 34" fill="none" stroke="#333"><path d="M1 6H16V33H1ZM6 6V1H12V6M12 14H22L28 20V33H12Z" fill="#eee"/></svg></button>
            <button class="flex items-center justify-center w-[40px] h-[40px] bg-[#e4e5e6] border border-[#c4c4c4]"><svg class="w-[26px] h-[34px]" viewBox="0 0 26 34"><path d="M2 1L24 33M24 1L2 33" stroke="#555"/></svg></button>
            <button class="flex items-center justify-center w-[40px] h-[40px] bg-[#e4e5e6] border border-[#c4c4c4]"><svg class="w-[32px] h-[34px]" viewBox="0 0 32 34" fill="none"><path d="M6 1H1V33H6M26 1H31V33H26" stroke="#e08a1d"/><circle cx="16" cy="17" r="8" stroke="#444"/><path d="M16 3V31M5 17H27" stroke="#444"/></svg></button>
            <button class="flex items-center justify-center w-[40px] h-[40px] bg-[#e4e5e6] border border-[#c4c4c4]"><svg class="w-[30px] h-[34px]" viewBox="0 0 30 34" fill="none" stroke="#333"><path d="M4 12L8 1H12V33H2V18ZM26 12L22 1H18V33H28V18ZM2 18H12M18 18H28M12 12H18"/></svg></button>
            <button class="flex items-center justify-center w-[40px] h-[40px] bg-[#ffd97a] border border-[#ffd97a]"><svg class="w-[30px] h-[38px]" viewBox="0 0 30 38" fill="none"><rect x="1" y="1" width="28" height="36" fill="#fff" stroke="#222" stroke-width="1.500"/><path d="M6 8H24M6 14H24M6 20H24M6 26H24V31H14M17 28L14 31L17 34" stroke="#222"/></svg></button>
            <button class="flex items-center justify-center w-[40px] h-[40px] bg-[#e4e5e6] border border-[#c4c4c4]"><span class="block w-[18px] h-[5px] bg-[#1446c8]"></span></button>
          </div>
          <div class="mx-[9px] h-[1287px] flex flex-col bg-[#eeeff0] border border-[#9d9d9d] border-t-2 border-t-[#666]">
            <div class="mt-[8px] mx-[8px] flex h-[19px] bg-white border-b border-[#ddd] border-t border-t-[#ddd] text-[12px] leading-[17px] text-[#111]">
              <div class="w-[225px] pl-[2px] border-r border-[#ddd]">Profile,GB-T11263_T-2005</div>
              <div class="w-[696px] pl-[2px] border-r border-[#ddd]">材料属性已重置，因为它不匹配材料指派。此操作是根据用户默认设置所采取的。</div>
              <div class="flex-1 pl-[2px]">原先的材料属性值：</div>
            </div>
          </div>
        </section>

        <!-- error message -->
        <section class="absolute left-[1396px] top-[662px] w-[538px] h-[182px] flex flex-col bg-[#f0f0f0] border border-[#aaa] border-t-0 text-[21px]">
          <div class="flex items-center h-[44px] shrink-0 -mx-px pl-[9px] bg-[#569fbb] text-white leading-none">型材</div>
          <div class="flex items-center h-[90px] pl-[24px]">
            <svg class="w-[56px] h-[56px]" viewBox="0 0 56 56"><circle cx="28" cy="28" r="27" fill="#d8d8d8" stroke="#a8a8a8"/><circle cx="28" cy="28" r="24" fill="url(#gr)"/><path d="M17 17L39 39M39 17L17 39" stroke="#cfcfcf" stroke-width="8" stroke-linecap="round"/></svg>
            <span class="ml-[27px] mt-[1px] text-[#222] leading-none whitespace-nowrap">管线布置：未在型材部件中找到型材数据。</span>
          </div>
          <div class="flex justify-center">
            <button class="flex items-center justify-center w-[116px] h-[36px] bg-[#71b1c8] text-[#f6fbfc] leading-none">
              <span class="flex items-center justify-center w-[111px] h-[31px] border border-dotted border-black">确定(<u>O</u>)</span>
            </button>
          </div>
        </section>
      </div>
    </div>
  </main>

  <!-- status bar -->
  <footer class="relative flex items-center h-[38px] shrink-0 bg-white border-t-2 border-[#b4b4b4] pl-[5px] font-medium leading-none text-[#222]">
    选择管线布置中的对象
    <svg class="absolute left-[3747px] top-[3px] w-[32px] h-[32px]" viewBox="0 0 32 32" fill="none" stroke="#444" stroke-width="1.300"><path d="M10 1H1V10M22 1H31V10M1 22V31H10M31 22V31H22"/></svg>
  </footer>
  <div class="flex h-[5px] shrink-0 bg-[#004d3f]"><div class="ml-[84px] w-[602px] bg-[#eef0f0] border-t-2 border-[#bdbdbd]"></div></div>
</div>

<script>
  // navigator rows
  const icon = {
    view: '<svg class="w-[24px] h-[24px]" viewBox="0 0 24 24"><path d="M1 2H23V22H1ZM1 5H23" fill="#fff" stroke="#444"/><path d="M5 17L10 9C13 7 14 10 14 13L20 16V18L12 20L5 18Z" fill="#999" stroke="#555"/></svg>',
    camera: '<svg class="w-[21px] h-[22px]" viewBox="0 0 21 22"><path d="M1 8L20 1V14L1 21Z" fill="#fff4e8" stroke="#e08a1d"/><circle cx="8" cy="10" r="5" fill="#888" stroke="#444"/><rect x="10" y="8" width="9" height="6" fill="#aaa" stroke="#444"/></svg>',
    folder: '<svg class="w-[24px] h-[20px]" viewBox="0 0 24 20" fill="none" stroke="#444"><path d="M1 18V2H9L11 5H19V8M1 18H19L23 8H5L1 18"/></svg>',
    datum: '<svg class="w-[24px] h-[24px]" viewBox="0 0 24 24" fill="none" stroke="#e0648c" stroke-width="1.200"><path d="M12 1V15M12 15L2 22M12 15L22 22M6 11H18L22 22H2Z"/></svg>',
    sketch: '<svg class="w-[24px] h-[24px]"><use href="#t-sketch"/></svg>',
    combo: '<svg class="w-[24px] h-[24px]" viewBox="0 0 24 24" fill="none" stroke-width="1.200"><path d="M1 6C8 1 16 2 23 8L21 16C14 10 8 12 1 6Z" stroke="#e08a1d"/><path d="M1 6L12 20L22 18" stroke="#1b9fc0"/></svg>',
    trim: '<svg class="w-[24px] h-[24px]"><use href="#t-trim"/></svg>',
    smooth: '<svg class="w-[24px] h-[24px]" viewBox="0 0 24 24" fill="none" stroke-width="1.200"><path d="M1 10C6 2 12 16 23 6" stroke="#1b9fc0"/><path d="M1 18C6 12 14 24 23 14" stroke="#e08a1d"/></svg>',
  };
  const box = s => `<span class="flex items-center justify-center w-[14px] h-[14px] border border-[#999] bg-white"><span class="relative block w-[8px] h-px bg-[#333]">${s == '+' ? '<span class="absolute left-[3.5px] top-[-3.5px] block w-px h-[8px] bg-[#333]"></span>' : ''}</span></span>`;
  const tick = '<svg class="w-[16px] h-[14px]"><use href="#tick"/></svg>';
  const data = [
    { box: '+', icon: icon.view, text: '模型视图' },
    { box: '+', pre: '<svg class="ml-[6px] w-[21px] h-[18px]" viewBox="0 0 16 14"><use href="#tick"/></svg>', icon: icon.camera, text: '摄像机', gap: 'ml-[5px]' },
    { box: '-', icon: icon.folder, text: '模型历史记录', c3: 1 },
    { icon: icon.datum, text: '基准坐...', c3: 1 },
    { icon: icon.sketch, text: '草图 (1) ...', c3: 1 },
    { icon: icon.sketch, text: '草图 (2) ...', c3: 1 },
    { icon: icon.sketch, text: '草图 (3) ...', c3: 1 },
    { icon: icon.combo, text: '组合曲...', c3: 1 },
    { icon: icon.trim, text: '修剪曲...', c3: 1 },
    { icon: icon.trim, text: '修剪曲...', c3: 1 },
    { icon: icon.trim, text: '修剪曲...', c3: 1 },
    { icon: icon.smooth, text: '光顺曲...', c3: 1, on: 1 },
  ];
  let html = '';
  for (let i = 0; i < 48; i++) {
    const r = data[i];
    const bg = i % 2 ? 'bg-[#f9f9f9]' : 'bg-white';
    let name = '';
    if (r && r.box) {
      name = `<div class="flex items-center h-full pl-[7px]">${box(r.box)}${r.pre || '<span class="w-[4px]"></span>'}<span class="${r.pre ? 'ml-[2px]' : ''}">${r.icon}</span><span class="${r.gap || 'ml-[3px]'} text-[#333]">${r.text}</span></div>`;
    } else if (r) {
      name = `<div class="relative flex items-center h-full pl-[49px]"><span class="absolute left-[38px] top-0 ${i == 11 ? 'h-[16px]' : 'h-full'} border-l border-dotted border-[#999]"></span><span class="absolute left-[38px] top-[15px] w-[11px] border-t border-dotted border-[#999]"></span><svg class="w-[23px] h-[23px]"><use href="${r.on ? '#eye-on' : '#eye-off'}"/></svg><span class="ml-px">${r.icon}</span><span class="ml-[3px] whitespace-nowrap ${r.on ? 'font-bold text-[#222]' : 'text-[#aaa]'}">${r.text}</span></div>`;
    }
    const c2 = r && r.on ? '<svg class="ml-[3px] w-[10px] h-[22px]" viewBox="0 0 10 22" fill="none" stroke="#444"><path d="M1 1H8V6H1ZM1 16H8V21H1Z"/><rect x="1" y="8.500" width="7" height="5" fill="#f08a1d"/></svg>' : '';
    html += `<div class="flex h-[32px] ${bg} border-b border-[#ececec] leading-none">
      <div class="w-[200px] border-r border-[#ececec]">${name}</div>
      <div class="flex items-center justify-center w-[24px] border-r border-[#ececec]">${c2}</div>
      <div class="flex items-center justify-center w-[24px] border-r border-[#ececec]">${r && r.c3 ? tick : ''}</div>
      <div class="w-[100px] border-r border-[#ececec]"></div>
      <div class="flex-1"></div>
    </div>`;
  }
  document.getElementById('rows').innerHTML = html;
</script>
</body>
</html>
